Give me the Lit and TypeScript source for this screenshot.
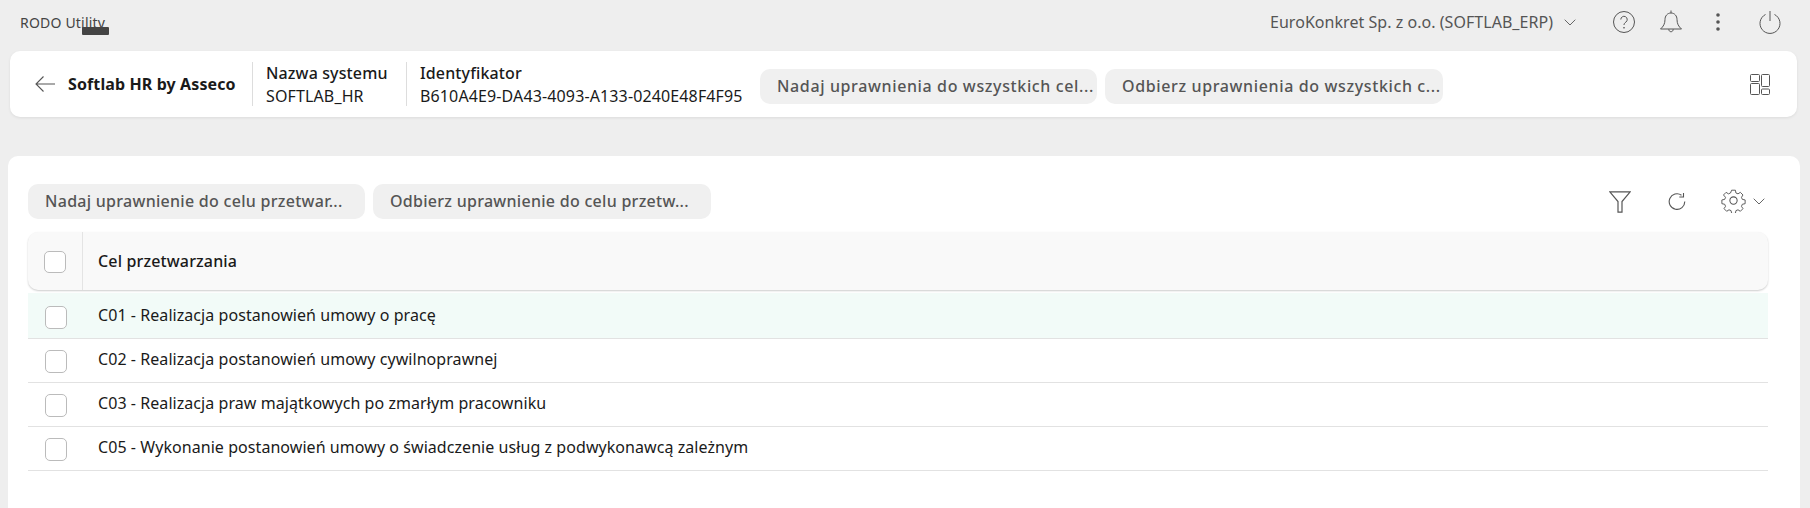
import { LitElement, html, css, svg } from "lit";
import { customElement } from "lit/decorators.js";

const rows = [
  "C01 - Realizacja postanowień umowy o pracę",
  "C02 - Realizacja postanowień umowy cywilnoprawnej",
  "C03 - Realizacja praw majątkowych po zmarłym pracowniku",
  "C05 - Wykonanie postanowień umowy o świadczenie usług z podwykonawcą zależnym",
];

const chevron = svg`<svg class="chev" width="12" height="7" viewBox="0 0 12 7" fill="none" stroke="#666" stroke-width="1"><path d="M.7.7 6 6l5.3-5.300"/></svg>`;

@customElement("app-root")
export class AppRoot extends LitElement {
  static styles = css`
    :host { display: block; width: 1810px; height: 508px; overflow: hidden; background: #eeeeee; font-family: "Noto Sans", sans-serif; color: #1a1a1a; font-size: 16px; }
    * { box-sizing: border-box; }
    svg { display: block; flex: none; }
    .top { height: 51px; display: flex; align-items: center; padding: 0 29px 7px 20px; }
    .brand { position: relative; font-size: 14px; letter-spacing: .2px; color: #444; flex: none; }
    .brand i { position: absolute; left: 62px; top: 14px; width: 27px; height: 8px; background: #444; border-radius: 1px; }
    .spacer { flex: 1; }
    .company { font-size: 16px; letter-spacing: .04px; color: #555; margin-right: 11px; }
    .top .chev { margin-right: 37px; }
    .icons { display: flex; align-items: center; }
    .head { margin: 0 13px 0 10px; height: 66px; background: #fff; border-radius: 10px; box-shadow: 0 1px 3px rgba(0,0,0,.08); display: flex; align-items: center; padding: 0 27px 0 25px; }
    .back { margin-right: 13px; }
    .title { font-weight: 700; font-size: 16px; letter-spacing: .11px; width: 184px; flex: none; white-space: nowrap; }
    .field { border-left: 1px solid #ddd; height: 44px; padding-left: 13px; flex: none; line-height: 23px; white-space: nowrap; font-size: 16px; letter-spacing: .13px; }
    .field b { font-weight: 500; display: block; }
    .f1 { width: 154px; }
    .f2 { width: 354px; }
    .btn { height: 35px; border-radius: 10px; background: #f0f0f0; color: #555; font-weight: 500; font-size: 16px; letter-spacing: .63px; line-height: 34px; padding: 0 17px; white-space: nowrap; overflow: hidden; flex: none; }
    .head .btn { margin-top: 5px; }
    .b1 { width: 337px; margin-right: 8px; }
    .b2 { width: 338px; }
    .main { margin: 39px 10px 0 8px; height: 360px; background: #fff; border-radius: 10px 10px 0 0; padding: 28px 32px 0 20px; }
    .tools { display: flex; align-items: center; height: 35px; margin-bottom: 13px; padding-right: 3px; }
    .tools .btn { letter-spacing: .28px; }
    .tools .b3 { width: 337px; margin-right: 8px; }
    .tools .b4 { width: 338px; }
    .refresh { margin-left: 37px; }
    .gear { margin-left: 35px; margin-bottom: 3px; }
    .gchev { margin-left: 7px; }
    .thead { height: 58px; background: #f9f9f9; border-radius: 10px; box-shadow: 0 1px 2px rgba(0,0,0,.2); display: flex; align-items: center; font-weight: 500; font-size: 16px; letter-spacing: .15px; margin-bottom: 3px; }
    .thead .cbw { height: 58px; border-right: 1px solid #e4e4e4; padding-left: 16px; }
    .thead .cb { width: 22px; height: 22px; }
    .cbw { width: 55px; flex: none; display: flex; align-items: center; padding: 2px 0 0 17px; }
    .cb { width: 22px; height: 23px; border: 1px solid #bbb; border-radius: 5px; background: #fff; }
    .label { padding-left: 15px; }
    .row { height: 44px; display: flex; align-items: center; border-bottom: 1px solid #e2e2e2; font-size: 16px; letter-spacing: .06px; }
    .row .label { margin-top: -4px; }
    .row.first { height: 46px; background: #f2fbf8; }
    .row.first .cbw { padding-top: 4px; }
    .row.first .label { margin-top: -2px; }
  `;

  render() {
    return html`
      <div class="top">
        <div class="brand">RODO Utility<i></i></div>
        <div class="spacer"></div>
        <div class="company">EuroKonkret Sp. z o.o. (SOFTLAB_ERP)</div>
        ${chevron}
        <div class="icons">
          <svg width="22" height="22" viewBox="0 0 22 22" fill="none" stroke="#555" stroke-width="1"><circle cx="11" cy="11" r="10.500"/><path d="M7.800 8.500a3.200 3.200 0 1 1 5.200 2.500c-1.200 1-2 1.500-2 3"/><circle cx="11" cy="16.800" r=".4" fill="#555"/></svg>
          <svg style="margin-left:25px" width="22" height="24" viewBox="0 0 22 24" fill="none" stroke="#555" stroke-width="1"><path d="M11 .5V3M11 3C7.300 3 5 6 5 9.500c0 4-1.500 7-4.500 9.500h21c-3-2.500-4.500-5.500-4.500-9.500C17 6 14.700 3 11 3Z"/><path d="M8.800 19.200c0 3.400 4.400 3.400 4.400 0"/></svg>
          <svg style="margin-left:33px" width="6" height="22" viewBox="0 0 6 22" fill="#555"><circle cx="3" cy="4" r="1.800"/><circle cx="3" cy="11" r="1.800"/><circle cx="3" cy="18" r="1.800"/></svg>
          <svg style="margin-left:38px" width="22" height="24" viewBox="0 0 22 24" fill="none" stroke="#555" stroke-width="1"><path d="M6.500 4.500a10 10 0 1 0 9 0M11 1v10"/></svg>
        </div>
      </div>
      <div class="head">
        <svg class="back" width="20" height="16" viewBox="0 0 20 16" fill="none" stroke="#555" stroke-width="1.100"><path d="M20 8H1M8.500.5 1 8l7.500 7.500"/></svg>
        <div class="title">Softlab HR by Asseco</div>
        <div class="field f1"><b>Nazwa systemu</b>SOFTLAB_HR</div>
        <div class="field f2"><b>Identyfikator</b>B610A4E9-DA43-4093-A133-0240E48F4F95</div>
        <div class="btn b1">Nadaj uprawnienia do wszystkich cel...</div>
        <div class="btn b2">Odbierz uprawnienia do wszystkich c...</div>
        <div class="spacer"></div>
        <svg width="20" height="21" viewBox="0 0 20 21" fill="none" stroke="#555" stroke-width="1"><rect x=".5" y=".5" width="9" height="7" rx="1"/><rect x="11.500" y=".5" width="8" height="12" rx="1"/><rect x=".5" y="9.500" width="9" height="11" rx="1"/><rect x="11.500" y="15" width="8" height="5.500" rx="1"/></svg>
      </div>
      <div class="main">
        <div class="tools">
          <div class="btn b3">Nadaj uprawnienie do celu przetwar...</div>
          <div class="btn b4">Odbierz uprawnienie do celu przetw...</div>
          <div class="spacer"></div>
          <svg width="22" height="22" viewBox="0 0 22 22" fill="none" stroke="#555" stroke-width="1.200"><path d="M.8.800h20.400L13 10.500V21.200H9V10.500Z"/></svg>
          <svg class="refresh" width="18" height="18" viewBox="0 0 18 18" fill="none" stroke="#555" stroke-width="1.100"><path d="M16.800 8.500A7.800 7.800 0 1 1 13.500 2.200M15.500 0v4h-4.200"/></svg>
          <svg class="gear" width="25" height="25" viewBox="0 0 24 24" fill="none" stroke="#555" stroke-width="1"><circle cx="12" cy="12" r="3.500"/><path d="M10 1h4l.6 3 2.200.9 2.500-1.600 2.800 2.800-1.600 2.500.9 2.200 3 .6v4l-3 .6-.9 2.200 1.600 2.500-2.800 2.800-2.500-1.600-2.200.9-.6 3h-4l-.6-3-2.200-.9-2.500 1.600-2.800-2.800 1.600-2.500-.9-2.200-3-.6v-4l3-.6.900-2.200L1.300 6.100l2.800-2.800 2.500 1.600 2.200-.9Z" transform="translate(1.200 1.200) scale(.9)"/></svg>
          <svg class="gchev" width="12" height="7" viewBox="0 0 12 7" fill="none" stroke="#666" stroke-width="1"><path d="M.7.7 6 6l5.300-5.300"/></svg>
        </div>
        <div class="thead"><div class="cbw"><div class="cb"></div></div><div class="label">Cel przetwarzania</div></div>
        ${rows.map((r, i) => html`<div class="row ${i === 0 ? "first" : ""}"><div class="cbw"><div class="cb"></div></div><div class="label">${r}</div></div>`)}
      </div>
    `;
  }
}
